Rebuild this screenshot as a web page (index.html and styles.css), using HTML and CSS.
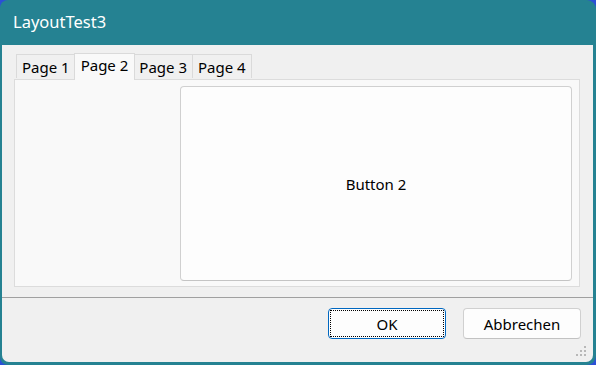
FILE: index.html
```html
<!DOCTYPE html>
<html>
<head>
    <title>LayoutTest3</title>
    <link rel="stylesheet" href="styles.css">
</head>
<body>
    <div class="window">
        <div class="titlebar">LayoutTest3</div>
        <div class="client">
            <div class="tabs">
                <div class="tab first">Page 1</div>
                <div class="tab selected">Page 2</div>
                <div class="tab">Page 3</div>
                <div class="tab">Page 4</div>
            </div>
            <div class="pane">
                <button class="big-button">Button 2</button>
            </div>
            <div class="separator"></div>
            <div class="buttons">
                <button class="btn focused"><span>OK</span></button>
                <button class="btn">Abbrechen</button>
            </div>
            <div class="grip">
                <i></i><i></i><i></i><i></i><i></i><i></i>
            </div>
        </div>
    </div>
</body>
</html>
```

FILE: styles.css
```css
body {
    margin: 0;
    background-color: #2b50d6;
    font-family: "Noto Sans", sans-serif;
}

.window {
    width: 596px;
    height: 365px;
    box-sizing: border-box;
    background-color: #258292;
    border-radius: 8px 9px 9px 8px;
    padding: 0 3px 3px 2px;
    display: flex;
    flex-direction: column;
}

.titlebar {
    height: 45px;
    flex-shrink: 0;
    color: white;
    font-size: 16.5px;
    line-height: 44px;
    padding-left: 11px;
}

.client {
    flex: 1;
    position: relative;
    background-color: #f0f0f0;
    border-radius: 0 0 7px 7px;
    padding-top: 8px;
    display: flex;
    flex-direction: column;
}

.tabs {
    display: flex;
    align-items: flex-end;
    height: 26px;
    margin: 0 13px 0 14px;
    position: relative;
    z-index: 1;
}

.tab {
    height: 24px;
    box-sizing: border-box;
    padding: 0 5px;
    border: 1px solid #dadada;
    border-bottom: none;
    margin-left: -1px;
    font-size: 15px;
    line-height: 24px;
    color: #000;
    background-color: #f0f0f0;
    margin-bottom: 1px;
}

.tab.first {
    margin-left: 0;
}

.tab.selected {
    height: 27px;
    margin-bottom: -1px;
    padding: 0 6px;
    margin-left: -2px;
    margin-right: -1px;
    background-color: #f9f9f9;
    line-height: 23px;
    position: relative;
    z-index: 2;
}

.pane {
    height: 208px;
    box-sizing: border-box;
    margin: 0 13px 0 12px;
    background-color: #f9f9f9;
    border: 1px solid #dcdcdc;
    padding: 6px 7px 5px 165px;
    display: flex;
}

.big-button {
    flex: 1;
    background-color: #fdfdfd;
    border: 1px solid #d0d0d0;
    border-bottom-color: #c4c4c4;
    border-radius: 4px;
    font-family: inherit;
    font-size: 15px;
    color: #000;
}

.separator {
    height: 1px;
    background-color: #a0a0a0;
    margin-top: 10px;
}

.buttons {
    display: flex;
    justify-content: flex-end;
    gap: 17px;
    margin: 10px 12px 0 0;
}

.btn {
    width: 118px;
    height: 31px;
    background-color: #fdfdfd;
    border: 1px solid #d0d0d0;
    border-bottom-color: #c2c2c2;
    border-radius: 4px;
    font-family: inherit;
    font-size: 15px;
    color: #000;
    padding: 0;
}

.btn.focused {
    border-color: #0067c0;
    padding: 1px;
}

.btn.focused span {
    display: flex;
    align-items: center;
    justify-content: center;
    height: 100%;
    border: 1px dotted #000;
    box-sizing: border-box;
}

.grip {
    position: absolute;
    right: 7px;
    bottom: 6px;
    width: 10px;
    height: 10px;
}

.grip i {
    position: absolute;
    width: 2px;
    height: 2px;
    background-color: #b8b8b8;
}

.grip i:nth-child(1) { right: 0; bottom: 0; }
.grip i:nth-child(2) { right: 4px; bottom: 0; }
.grip i:nth-child(3) { right: 8px; bottom: 0; }
.grip i:nth-child(4) { right: 0; bottom: 4px; }
.grip i:nth-child(5) { right: 4px; bottom: 4px; }
.grip i:nth-child(6) { right: 0; bottom: 8px; }
```
